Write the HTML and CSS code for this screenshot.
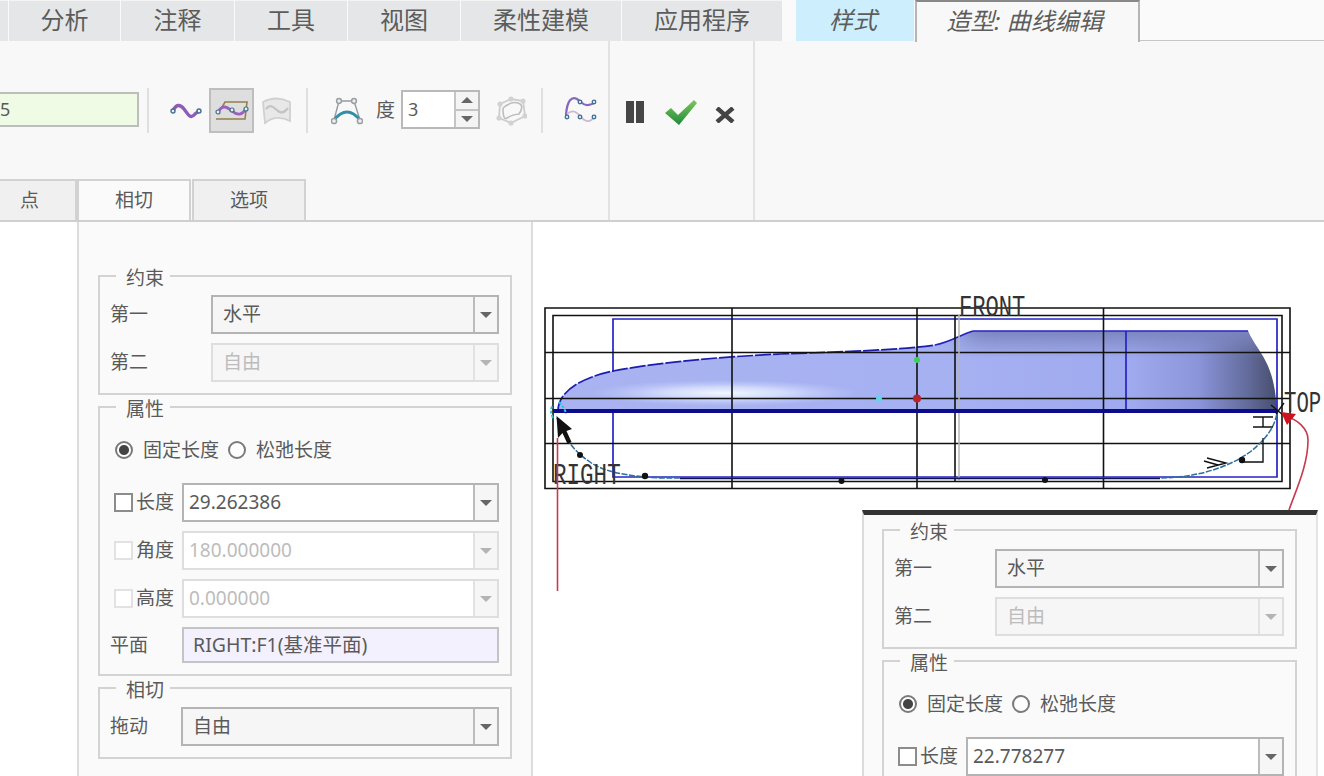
FILE: index.html
```html
<!DOCTYPE html>
<html lang="zh-CN">
<head>
<meta charset="utf-8">
<title>造型: 曲线编辑</title>
<link rel="stylesheet" href="styles.css">
</head>
<body>
<nav class="tabs">
  <div class="tab stub"></div>
  <div class="tab t-a">分析</div>
  <div class="tab t-b">注释</div>
  <div class="tab t-c">工具</div>
  <div class="tab t-d">视图</div>
  <div class="tab t-e">柔性建模</div>
  <div class="tab t-f">应用程序</div>
  <div class="tab t-g style">样式</div>
  <div class="tab t-h active">造型: 曲线编辑</div>
  <div class="tabs-rest"></div>
</nav>

<section class="ribbon">
  <div class="group group-main">
    <div class="tool-row">
      <div class="name-input">5</div>
      <span class="sep sep-a"></span>
      <svg class="ic ic-wave" viewBox="0 0 33 22"><path d="M3 11C6 4 10 4 14 9S20 20 25 14L29 11" fill="none" stroke="#8e5bb8" stroke-width="3.400"/><g fill="#e8f0f4" stroke="#45708c" stroke-width="1.400"><circle cx="3" cy="11" r="2"/><circle cx="29" cy="11" r="2"/></g></svg>
      <div class="tool-btn">
        <svg class="ic-plane" viewBox="0 0 37 25"><path d="M3 21H32L34 4H12L8 11" fill="none" stroke="#94804a" stroke-width="1.600"/><path d="M5 14C9 7 13 8 19 13S29 17 33 11" fill="none" stroke="#9a62bf" stroke-width="2.800"/><g fill="#e8f0f4" stroke="#45708c" stroke-width="1.200"><circle cx="5" cy="14" r="2"/><circle cx="19" cy="12" r="2"/><circle cx="33" cy="11" r="2"/></g></svg>
      </div>
      <svg class="ic ic-surface" viewBox="0 0 31 30"><path d="M2 6Q15 -1 29 6L29 25Q15 18 4 27Z" fill="#e8e8e8" stroke="#d0d0d0" stroke-width="1.800"/><path d="M5 13C10 7 13 12 17 15S24 16 27 12" fill="none" stroke="#c4c4c4" stroke-width="2.200"/></svg>
      <span class="sep sep-b"></span>
      <svg class="ic ic-degree" viewBox="0 0 32 28"><path d="M3 23L8 4H23L29 23" fill="none" stroke="#969ba0" stroke-width="1.400"/><path d="M3 23Q16 7 29 23" fill="none" stroke="#2f8fa8" stroke-width="3.200"/><g fill="#eee" stroke="#9a9ea2" stroke-width="1.500"><circle cx="8" cy="4" r="2.400"/><circle cx="23" cy="4" r="2.400"/><circle cx="3" cy="24" r="2.600"/><circle cx="29" cy="24" r="2.600"/></g></svg>
      <span class="tool-label">度</span>
      <div class="spin">
        <span class="spin-value">3</span>
        <span class="spin-btns"><span class="spin-up"><i class="tri-up"></i></span><span class="spin-down"><i class="tri-down"></i></span></span>
      </div>
      <svg class="ic ic-blob" viewBox="0 0 32 30"><path d="M5 8L16 3L28 5L30 20L16 27L4 22Z" fill="none" stroke="#cdcdcd" stroke-width="1.800"/><path d="M8 12Q16 5 23 7T24 18Q16 19 12 22T8 12" fill="none" stroke="#bdbdbd" stroke-width="1.600"/><g fill="#d2d2d2"><circle cx="5" cy="8" r="2.600"/><circle cx="16" cy="3" r="2.600"/><circle cx="28" cy="5" r="2.600"/><circle cx="30" cy="20" r="2.600"/><circle cx="16" cy="27" r="2.600"/><circle cx="4" cy="22" r="2.600"/></g></svg>
      <span class="sep sep-c"></span>
      <svg class="ic ic-curves" viewBox="0 0 36 31"><path d="M3 20C4 5 9 1 14 4S20 11 25 10 31 9 32 6" fill="none" stroke="#8668bd" stroke-width="2.200"/><path d="M4 19C10 14 14 17 18 22S27 28 31 22" fill="none" stroke="#cdb8d0" stroke-width="1.800"/><g fill="#dfeaf2" stroke="#3d6f96" stroke-width="1.300"><circle cx="17" cy="7" r="1.800"/><circle cx="31" cy="7" r="1.800"/><circle cx="4" cy="22" r="1.800"/><circle cx="17" cy="22" r="1.800"/><circle cx="31" cy="22" r="1.800"/></g></svg>
    </div>
    <div class="subtabs">
      <div class="subtab st-point">点</div>
      <div class="subtab st-on">相切</div>
      <div class="subtab st-opt">选项</div>
    </div>
  </div>
  <div class="group group-ctrl">
    <svg class="ctl ctl-pause" viewBox="0 0 18 22"><path d="M0 0H8V22H0ZM10 0H18V22H10Z" fill="#464646"/></svg>
    <svg class="ctl ctl-check" viewBox="0 0 34 28"><defs><linearGradient id="chk" x1="0" y1="0" x2="0" y2="1"><stop offset="0" stop-color="#7fc65a"/><stop offset="1" stop-color="#1f8a3c"/></linearGradient></defs><path d="M1 14L7 9L14 16L30 1L33 4L15 26Z" fill="url(#chk)"/></svg>
    <svg class="ctl ctl-x" viewBox="0 0 20 16"><path d="M2 1L18 15M18 1L2 15" stroke="#444" stroke-width="4.400" fill="none"/></svg>
  </div>
  <div class="group group-fill"></div>
</section>

<main class="workspace">
  <aside class="panel panel-main">
    <fieldset class="box">
      <legend>约束</legend>
      <div class="rows">
        <div class="row"><span class="lab lab-wide">第一</span><div class="combo"><span class="val pad">水平</span><span class="drop"><i class="tri-down"></i></span></div></div>
        <div class="row"><span class="lab lab-wide">第二</span><div class="combo off"><span class="val pad">自由</span><span class="drop"><i class="tri-down"></i></span></div></div>
      </div>
    </fieldset>
    <fieldset class="box">
      <legend>属性</legend>
      <div class="rows">
        <div class="radios"><span class="radio on"></span><span class="radio-text">固定长度</span><span class="radio"></span><span class="radio-text">松弛长度</span></div>
        <div class="row"><span class="lab lab-check"><i class="check"></i>长度</span><div class="combo edit"><span class="val">29.262386</span><span class="drop"><i class="tri-down"></i></span></div></div>
        <div class="row"><span class="lab lab-check"><i class="check dim"></i>角度</span><div class="combo edit off"><span class="val">180.000000</span><span class="drop"><i class="tri-down"></i></span></div></div>
        <div class="row"><span class="lab lab-check"><i class="check dim"></i>高度</span><div class="combo edit off"><span class="val">0.000000</span><span class="drop"><i class="tri-down"></i></span></div></div>
        <div class="row"><span class="lab lab-plane">平面</span><div class="ref-field">RIGHT:F1(基准平面)</div></div>
      </div>
    </fieldset>
    <fieldset class="box">
      <legend>相切</legend>
      <div class="rows">
        <div class="row"><span class="lab lab-drag">拖动</span><div class="combo"><span class="val pad">自由</span><span class="drop"><i class="tri-down"></i></span></div></div>
      </div>
    </fieldset>
  </aside>

  <div class="viewport">
    <svg class="model" viewBox="533 222 791 554">
      <defs>
        <linearGradient id="body" x1="558" y1="0" x2="1277" y2="0" gradientUnits="userSpaceOnUse">
          <stop offset="0" stop-color="#a9b3f0"/><stop offset=".55" stop-color="#a6b1f2"/><stop offset=".8" stop-color="#9fa9ee"/><stop offset=".89" stop-color="#8b95da"/><stop offset=".96" stop-color="#626b9a"/><stop offset="1" stop-color="#464d6e"/>
        </linearGradient>
        <linearGradient id="shade" x1="0" y1="331" x2="0" y2="358" gradientUnits="userSpaceOnUse">
          <stop offset="0" stop-color="#7c85bf"/><stop offset="1" stop-color="#7c85bf" stop-opacity="0"/>
        </linearGradient>
        <radialGradient id="shine" cx=".5" cy=".5" r=".5">
          <stop offset="0" stop-color="#f2f8ff"/><stop offset=".45" stop-color="#dfe8ff" stop-opacity=".75"/><stop offset="1" stop-color="#c8d2fb" stop-opacity="0"/>
        </radialGradient>
        <filter id="soft"><feGaussianBlur stdDeviation="14 0"/></filter>
        <clipPath id="hull"><path d="M558 411C558 392 580 378 613 371C660 362 720 357 780 354C840 352 900 350 935 345C950 342 960 335 973 331H1248C1253 343 1262 352 1268 366C1274 380 1276 395 1277 411Z"/></clipPath>
      </defs>

      <path class="hull" d="M558 411C558 392 580 378 613 371C660 362 720 357 780 354C840 352 900 350 935 345C950 342 960 335 973 331H1248C1253 343 1262 352 1268 366C1274 380 1276 395 1277 411Z"/>
      <g clip-path="url(#hull)">
        <rect x="960" y="331" width="320" height="30" fill="url(#shade)" filter="url(#soft)"/>
        <ellipse cx="725" cy="393" rx="135" ry="13" fill="url(#shine)"/>
      </g>

      <g class="blue">
        <path d="M613 372V319H1277V477H613V411"/>
        <path d="M1126 331V411"/>
        <path d="M973 331H1248M973 331C960 335 950 342 935 345"/>
        <path class="dashed" d="M558 411C558 392 580 378 613 371C660 362 720 357 780 354C840 352 900 350 935 345"/>
      </g>

      <g class="grid">
        <path d="M545 308H1290V488.500H545Z"/>
        <path d="M553 315.500H1282V481.500H553Z"/>
        <path d="M545 352.500H1290M545 398.500H1290M545 443.500H1290"/>
        <path d="M732 308V488.500M917 308V488.500M1103.500 308V488.500M955 315V481"/>
      </g>
      <path class="grey-line" d="M959 315V481"/>

      <path class="thick" d="M553 411H1277"/>
      <path class="spline" d="M557 418C565 440 575 452 590 462C605 472 625 476 660 478H1160C1190 478 1225 470 1250 452C1268 438 1275 425 1277 413"/>
      <path class="dark-run" d="M680 478.500H1160"/>
      <g class="knots">
        <circle cx="580" cy="455" r="3"/><circle cx="645" cy="476" r="3.200"/><circle cx="841.500" cy="481" r="3"/><circle cx="1045" cy="480" r="3"/><circle cx="1242" cy="460" r="3.200"/>
      </g>
      <circle cx="917" cy="398.500" r="4" fill="#b9232e"/>
      <circle cx="879" cy="398.500" r="3" fill="#5fd5ea"/>
      <circle cx="917" cy="360" r="3" fill="#3fcf5a"/>
      <path class="cyan" d="M553 418Q549 410 553 405M559 402Q565 408 566 414"/>

      <text class="datum" transform="translate(959 316) scale(1.030 1.400)">FRONT</text>
      <text class="datum" transform="translate(553 484) scale(1.050 1.400)">RIGHT</text>
      <text class="datum" transform="translate(1284 412) scale(.960 1.400)">TOP</text>

      <g class="marks">
        <path d="M1253 417H1273M1253 427H1273M1263 417V427"/>
        <path d="M1263 438V462H1240"/>
        <path d="M1207 458L1226 463L1207 468M1204 461L1218 465"/>
        <path d="M1271 405L1283 415M1284 403L1276 414"/>
      </g>

      <path class="red-line" d="M557.500 438V591"/>
      <path class="red-line" d="M1289 510C1296 490 1308 465 1308 440C1308 428 1297 420 1288 417"/>
      <path d="M1281 412L1296 414L1287 425Z" fill="#d0121f"/>
      <path d="M556.500 416L572 429L566.500 431L571.500 442L567.500 444L562.500 433L558 438Z" fill="#111"/>
    </svg>

    <aside class="panel panel-float">
      <fieldset class="box">
        <legend>约束</legend>
        <div class="rows">
          <div class="row"><span class="lab lab-wide">第一</span><div class="combo"><span class="val pad">水平</span><span class="drop"><i class="tri-down"></i></span></div></div>
          <div class="row"><span class="lab lab-wide">第二</span><div class="combo off"><span class="val pad">自由</span><span class="drop"><i class="tri-down"></i></span></div></div>
        </div>
      </fieldset>
      <fieldset class="box">
        <legend>属性</legend>
        <div class="rows">
          <div class="radios"><span class="radio on"></span><span class="radio-text">固定长度</span><span class="radio"></span><span class="radio-text">松弛长度</span></div>
          <div class="row"><span class="lab lab-check"><i class="check"></i>长度</span><div class="combo edit"><span class="val">22.778277</span><span class="drop"><i class="tri-down"></i></span></div></div>
        </div>
      </fieldset>
    </aside>
  </div>
</main>
</body>
</html>
```

FILE: styles.css
```css
* { box-sizing: border-box; }

html, body {
  margin: 0;
  width: 1324px;
  height: 776px;
  overflow: hidden;
  background: #fff;
  color: #5a5a5a;
  font-family: "Noto Sans", "Noto Sans CJK SC", sans-serif;
  font-size: 19px;
}

/* top tab strip */
.tabs {
  display: flex;
  height: 41px;
  background: #fafafa;
}
.tab {
  display: flex;
  align-items: center;
  justify-content: center;
  height: 41px;
  padding-bottom: 2px;
  margin-right: 1px;
  background: #e5e6e7;
  font-size: 24px;
  line-height: 1;
  color: #5c5c5c;
  border-top: 1px solid #f4f4f4;
}
.stub { width: 8px; }
.t-a { width: 111px; }
.t-b { width: 113px; }
.t-c { width: 112px; }
.t-d { width: 112px; }
.t-e { width: 160px; }
.t-f { width: 160px; margin-right: 14px; }
.t-g { width: 118px; padding-right: 4px; }
.t-h { width: 225px; padding-right: 6px; }
.style {
  background: #cdeefc;
  font-style: italic;
  border-top-color: #cdeefc;
}
.active {
  position: relative;
  z-index: 1;
  height: 42px;
  margin-right: 0;
  background: #f8f8f8;
  font-style: italic;
  border-top: 2px solid #888;
  border-left: 2px solid #b5b5b5;
  border-right: 2px solid #b5b5b5;
}
.tabs-rest {
  flex: 1;
  border-bottom: 1px solid #c6c6c6;
}

/* ribbon */
.ribbon {
  display: flex;
  height: 181px;
  background: #f8f8f8;
  border-bottom: 2px solid #cfcfcf;
}
.group-main {
  display: flex;
  flex-direction: column;
  justify-content: space-between;
  width: 610px;
  padding-top: 47px;
  border-right: 2px solid #e2e2e2;
}
.group-ctrl {
  display: flex;
  align-items: flex-start;
  width: 145px;
  padding-top: 60px;
  border-right: 2px solid #e2e2e2;
}
.group-fill { flex: 1; }

.tool-row {
  display: flex;
  align-items: center;
  height: 45px;
}
.name-input {
  width: 143px;
  height: 35px;
  margin: 0 0 2px -4px;
  padding-left: 2px;
  background: #effbe4;
  border: 2px solid #bdbdbd;
  font-size: 18px;
  line-height: 31px;
}
.sep {
  width: 2px;
  height: 45px;
  background: #dfdfdf;
}
.sep-a { margin-left: 8px; }
.sep-b { margin-left: 14px; }
.sep-c { margin-left: 14px; }
.ic { display: block; flex: none; }
.ic-wave { width: 33px; height: 22px; margin-left: 21px; }
.tool-btn {
  display: flex;
  align-items: center;
  justify-content: center;
  width: 45px;
  height: 45px;
  margin-left: 6px;
  background: #dedede;
  border: 2px solid #bebebe;
}
.ic-plane { width: 37px; height: 25px; }
.ic-surface { width: 31px; height: 30px; margin-left: 7px; }
.ic-degree { width: 32px; height: 28px; margin-left: 23px; }
.tool-label { width: 19px; margin-left: 13px; margin-right: 6px; line-height: 1; }
.spin {
  display: flex;
  width: 79px;
  height: 39px;
  margin-bottom: 2px;
  background: #fff;
  border: 2px solid #b9b9b9;
}
.spin-value {
  flex: 1;
  padding-left: 5px;
  font-size: 18px;
  line-height: 35px;
}
.spin-btns {
  display: flex;
  flex-direction: column;
  width: 24px;
  background: #f4f4f4;
  border-left: 2px solid #c4c4c4;
}
.spin-up, .spin-down {
  display: flex;
  flex: 1;
  align-items: center;
  justify-content: center;
}
.spin-up { border-bottom: 2px solid #c4c4c4; }
.ic-blob { width: 32px; height: 30px; margin-left: 15px; }
.ic-curves { width: 36px; height: 31px; margin-left: 20px; }

.tri-up, .tri-down {
  display: block;
  width: 0;
  height: 0;
  border-left: 6px solid transparent;
  border-right: 6px solid transparent;
}
.tri-up { border-bottom: 6px solid #666; }
.tri-down { border-top: 6px solid #666; }

.subtabs {
  display: flex;
  height: 41px;
}
.subtab {
  display: flex;
  align-items: center;
  justify-content: center;
  height: 41px;
  background: #f0f0f0;
  border: 2px solid #d2d2d2;
  border-bottom: 0;
  line-height: 1;
}
.st-point { width: 95px; margin-left: -18px; }
.st-on { width: 114px; background: #fafafa; }
.st-opt { width: 114px; margin-left: 1px; }

.ctl { display: block; flex: none; }
.ctl-pause { width: 18px; height: 22px; margin-left: 16px; }
.ctl-check { width: 34px; height: 28px; margin-left: 20px; margin-top: -2px; }
.ctl-x { width: 20px; height: 16px; margin-left: 17px; margin-top: 6px; }

/* work area */
.workspace {
  display: flex;
  height: 554px;
  overflow: hidden;
}
.panel {
  background: #fafafa;
  border-left: 2px solid #dcdcdc;
}
.panel-main {
  flex: none;
  width: 456px;
  margin-left: 77px;
  padding: 42px 19px 0 19px;
  border-right: 2px solid #dcdcdc;
}
.viewport {
  position: relative;
  flex: 1;
}
.model {
  position: absolute;
  top: 0;
  left: 0;
  width: 791px;
  height: 554px;
  overflow: hidden;
}
.panel-float {
  position: absolute;
  top: 288px;
  left: 329px;
  width: 456px;
  height: 270px;
  padding: 3px 19px 0 18px;
  border-top: 5px solid #333;
  border-right: 2px solid #e4e4e4;
}

.box {
  min-width: 0;
  margin: 0;
  padding: 7px 11px 11px 10px;
  border: 2px solid #d3d3d3;
}
.box legend {
  height: 24px;
  margin-left: 6px;
  padding: 0 6px 0 10px;
  font-size: 19px;
  line-height: 28px;
}
.rows {
  display: flex;
  flex-direction: column;
  gap: 9px;
}
.row {
  display: flex;
  align-items: center;
}
.lab {
  flex: none;
  display: flex;
  align-items: center;
  line-height: 1;
}
.lab-wide { width: 101px; }
.lab-check { width: 72px; padding-left: 4px; }
.lab-plane { width: 72px; }
.lab-drag { width: 71px; }

.combo {
  flex: 1;
  display: flex;
  height: 39px;
  background: #f6f6f6;
  border: 2px solid #b4b4b4;
}
.combo.edit { background: #fff; }
.val {
  flex: 1;
  padding-left: 5px;
  font-size: 19px;
  line-height: 35px;
  white-space: nowrap;
}
.val.pad { padding-left: 10px; }
.drop {
  display: flex;
  align-items: center;
  justify-content: center;
  width: 24px;
  background: #f6f6f6;
  border-left: 2px solid #bcbcbc;
}
.combo.off { border-color: #dedede; }
.combo.off .val { color: #bcbcbc; }
.combo.off .drop { border-left-color: #e2e2e2; }
.combo.off .tri-down { border-top-color: #b4b4b4; }

.ref-field {
  flex: 1;
  height: 36px;
  padding-left: 9px;
  background: #f3f1fe;
  border: 2px solid #c4c4c4;
  font-size: 19.500px;
  line-height: 32px;
  white-space: nowrap;
}

.check {
  display: block;
  flex: none;
  width: 19px;
  height: 19px;
  margin-right: 3px;
  background: #fff;
  border: 2px solid #8c8c8c;
}
.check.dim { border-color: #e2e2e2; }

.radios {
  display: flex;
  align-items: center;
  height: 48px;
  padding-left: 5px;
}
.radio {
  flex: none;
  width: 18px;
  height: 18px;
  background: #fff;
  border: 2px solid #7a7a7a;
  border-radius: 50%;
}
.radio.on {
  background: radial-gradient(circle, #444 0 4.500px, #fff 5.500px);
}
.radio-text {
  width: 85px;
  margin-left: 10px;
  line-height: 1;
}

/* model drawing */
.hull { fill: url(#body); }
.blue path { fill: none; stroke: #2424c4; stroke-width: 1.700; }
.blue .dashed { stroke: #1c1cae; stroke-dasharray: 16 2; }
.grid path { fill: none; stroke: #111; stroke-width: 1.600; }
.grey-line { fill: none; stroke: #b4b4b4; stroke-width: 1.500; }
.thick { fill: none; stroke: #0b0b8c; stroke-width: 4; }
.spline { fill: none; stroke: #2c6f9e; stroke-width: 1.500; stroke-dasharray: 6 1.500; }
.dark-run { fill: none; stroke: #101050; stroke-width: 1.500; }
.knots circle { fill: #111; }
.cyan { fill: none; stroke: #29c6e6; stroke-width: 2; stroke-dasharray: 3 1.500; }
.datum {
  font-family: "Liberation Mono", monospace;
  font-size: 21.500px;
  fill: #333;
}
.marks path { fill: none; stroke: #111; stroke-width: 1.400; }
.red-line { fill: none; stroke: #c93a4e; stroke-width: 1.600; }
```
